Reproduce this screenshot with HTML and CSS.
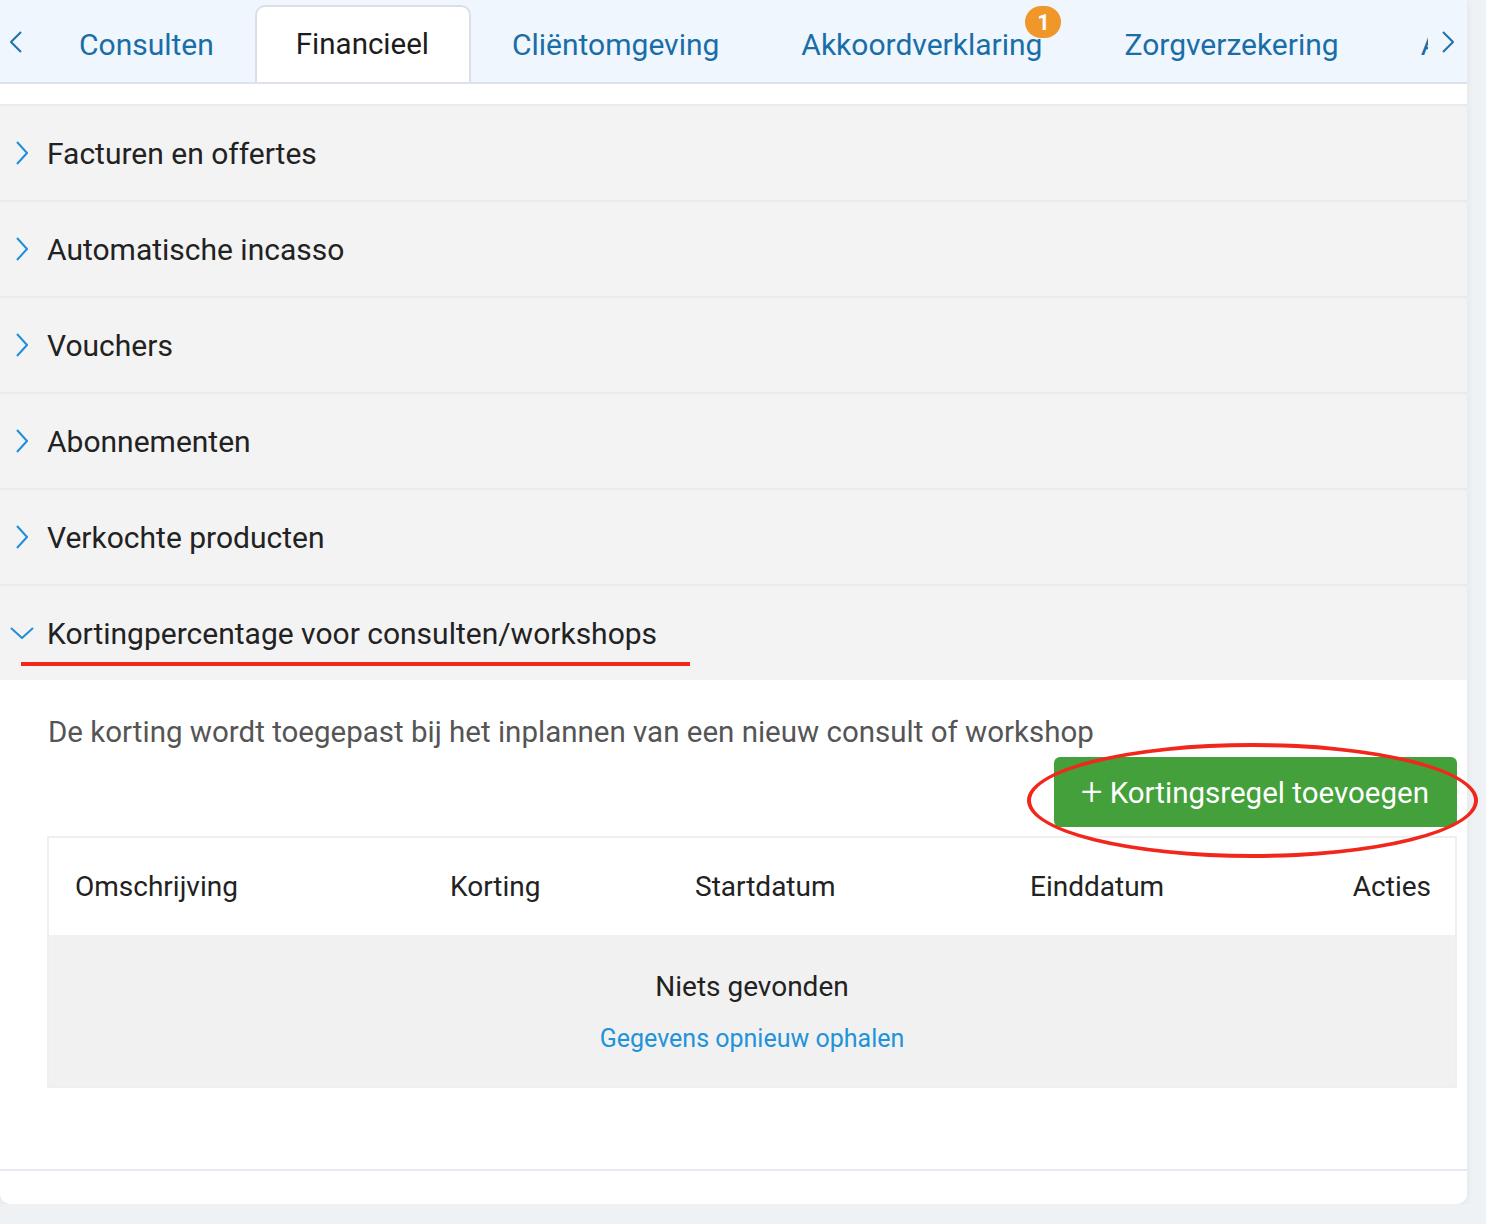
FILE: index.html
```html
<!DOCTYPE html>
<html lang="nl">
<head>
    <meta charset="UTF-8">
    <meta name="viewport" content="width=device-width, initial-scale=1.0">
    <title>Financieel</title>
    <link rel="stylesheet" href="styles.css">
</head>
<body>
    <div class="card">
        <div class="tabbar">
            <button class="tab-arrow" type="button" aria-label="Vorige">
                <svg width="12" height="22" viewBox="0 0 12 22"><path d="M11 1 1 11l10 10" fill="none" stroke="currentColor" stroke-width="2"/></svg>
            </button>
            <div class="tabs">
                <div class="tab">Consulten</div>
                <div class="tab active">Financieel</div>
                <div class="tab">Cliëntomgeving</div>
                <div class="tab">Akkoordverklaring<span class="badge">1</span></div>
                <div class="tab">Zorgverzekering</div>
                <div class="tab">Afspraken</div>
            </div>
            <button class="tab-arrow" type="button" aria-label="Volgende">
                <svg width="12" height="22" viewBox="0 0 12 22"><path d="M1 1l10 10L1 21" fill="none" stroke="currentColor" stroke-width="2"/></svg>
            </button>
        </div>

        <div class="accordion">
            <div class="panel">
                <div class="panel-head">
                    <svg class="chevron" width="12" height="24" viewBox="0 0 12 24"><path d="M1 1l10 11L1 23" fill="none" stroke="currentColor" stroke-width="2"/></svg>
                    <span>Facturen en offertes</span>
                </div>
            </div>
            <div class="panel">
                <div class="panel-head">
                    <svg class="chevron" width="12" height="24" viewBox="0 0 12 24"><path d="M1 1l10 11L1 23" fill="none" stroke="currentColor" stroke-width="2"/></svg>
                    <span>Automatische incasso</span>
                </div>
            </div>
            <div class="panel">
                <div class="panel-head">
                    <svg class="chevron" width="12" height="24" viewBox="0 0 12 24"><path d="M1 1l10 11L1 23" fill="none" stroke="currentColor" stroke-width="2"/></svg>
                    <span>Vouchers</span>
                </div>
            </div>
            <div class="panel">
                <div class="panel-head">
                    <svg class="chevron" width="12" height="24" viewBox="0 0 12 24"><path d="M1 1l10 11L1 23" fill="none" stroke="currentColor" stroke-width="2"/></svg>
                    <span>Abonnementen</span>
                </div>
            </div>
            <div class="panel">
                <div class="panel-head">
                    <svg class="chevron" width="12" height="24" viewBox="0 0 12 24"><path d="M1 1l10 11L1 23" fill="none" stroke="currentColor" stroke-width="2"/></svg>
                    <span>Verkochte producten</span>
                </div>
            </div>
            <div class="panel open">
                <div class="panel-head">
                    <svg class="chevron" width="24" height="12" viewBox="0 0 24 12"><path d="M1 1l11 10L23 1" fill="none" stroke="currentColor" stroke-width="2"/></svg>
                    <span>Kortingpercentage voor consulten/workshops</span>
                    <div class="mark-line"></div>
                </div>
                <div class="panel-body">
                    <p class="intro">De korting wordt toegepast bij het inplannen van een nieuw consult of workshop</p>
                    <div class="actions">
                        <button class="btn-add" type="button"><span class="plus">+</span> Kortingsregel toevoegen</button>
                        <div class="mark-ring"></div>
                    </div>
                    <table class="discounts">
                        <colgroup>
                            <col class="c-desc">
                            <col class="c-pct">
                            <col class="c-start">
                            <col class="c-end">
                            <col>
                        </colgroup>
                        <thead>
                            <tr>
                                <th>Omschrijving</th>
                                <th>Korting</th>
                                <th>Startdatum</th>
                                <th>Einddatum</th>
                                <th class="right">Acties</th>
                            </tr>
                        </thead>
                        <tbody>
                            <tr class="empty">
                                <td colspan="5">
                                    <div>Niets gevonden</div>
                                    <a href="#">Gegevens opnieuw ophalen</a>
                                </td>
                            </tr>
                        </tbody>
                    </table>
                </div>
            </div>
        </div>
    </div>
</body>
</html>
```

FILE: styles.css
```css
body {
    font-family: Roboto, "Noto Sans", sans-serif;
    background-color: #eef2f4;
    margin: 0;
    color: #222;
}

.card {
    width: 1467px;
    background: #fff;
    border-radius: 0 0 10px 10px;
    box-shadow: 0 2px 10px rgba(0, 0, 0, 0.06);
    padding-bottom: 33px;
}

/* tab strip */
.tabbar {
    display: flex;
    height: 82px;
    background-color: #eff6fe;
    border-bottom: 2px solid #dde2ec;
    margin-bottom: 20px;
}

.tab-arrow {
    flex: 0 0 auto;
    width: 38px;
    border: none;
    background: none;
    padding: 0;
    color: #1f73ab;
    display: flex;
    align-items: center;
    justify-content: center;
    padding-top: 2px;
}

.tab-arrow:first-child {
    justify-content: flex-start;
    padding-left: 10px;
}

.tab-arrow:last-child {
    width: 39px;
}

.tabs {
    flex: 1;
    display: flex;
    align-items: flex-end;
    overflow: hidden;
}

.tab {
    position: relative;
    flex: 0 0 auto;
    height: 74px;
    padding: 0 41px 3px;
    display: flex;
    align-items: center;
    font-size: 30px;
    color: #1a6ea7;
    white-space: nowrap;
    margin-bottom: -2px;
}

.tab:first-child {
    padding-left: 41px;
}

.tab.active {
    background: #fff;
    color: #1c1c1c;
    border: 2px solid #d9dee8;
    border-bottom: none;
    border-radius: 10px 10px 0 0;
    padding: 0 40px 3px 39px;
    height: 74px;
    font-size: 29.5px;
}

.badge {
    position: absolute;
    top: -1px;
    right: 22px;
    width: 36px;
    height: 32px;
    border-radius: 16px;
    background: #f0972a;
    color: #fff;
    font-size: 22px;
    font-weight: 700;
    display: flex;
    align-items: center;
    justify-content: center;
}

/* accordion */
.panel {
    border-top: 2px solid #e8eaf2;
    background: #f3f3f3;
}

.panel.open {
    border-bottom: 2px solid #e6e8f3;
}

.panel-head {
    position: relative;
    height: 94px;
    display: flex;
    align-items: center;
    font-size: 30px;
    color: #222;
}

.chevron {
    flex: 0 0 auto;
    color: #1f8fd8;
    margin-left: 16px;
    margin-right: 19px;
}

.panel.open .chevron {
    margin-left: 10px;
    margin-right: 13px;
}

.mark-line {
    position: absolute;
    left: 21px;
    top: 76px;
    width: 669px;
    height: 4px;
    background: #f2271c;
}

.panel-body {
    background: #fff;
    padding: 34px 10px 81px 47px;
}

.intro {
    margin: 0;
    font-size: 29.5px;
    color: #555;
    line-height: 36px;
    padding-left: 1px;
}

.actions {
    position: relative;
    display: flex;
    justify-content: flex-end;
    margin-top: 7px;
    margin-bottom: 9px;
}

.btn-add {
    height: 70px;
    padding: 0 28px 0 27px;
    background-color: #43a03a;
    color: #fff;
    border: none;
    border-radius: 6px;
    font-family: inherit;
    font-size: 29.5px;
}

.btn-add .plus {
    font-size: 38px;
    font-weight: 300;
    line-height: 1;
    vertical-align: -2px;
}

.mark-ring {
    position: absolute;
    right: -21px;
    top: -14px;
    width: 451px;
    height: 115px;
    border: 4px solid #f2271c;
    border-radius: 50%;
    box-sizing: border-box;
    pointer-events: none;
}

/* discount table */
.discounts {
    width: 100%;
    border-collapse: collapse;
    table-layout: fixed;
    border: 2px solid #efefef;
}

.c-desc { width: 376px; }
.c-pct { width: 245px; }
.c-start { width: 335px; }
.c-end { width: 250px; }

.discounts th {
    height: 97px;
    padding: 0 0 0 26px;
    text-align: left;
    font-weight: 400;
    font-size: 28px;
    color: #222;
}

.discounts th.right {
    text-align: right;
    padding: 0 24px 0 0;
}

.empty td {
    background: #f1f1f1;
    text-align: center;
    height: 148px;
    padding: 3px 0 0;
    font-size: 28px;
    line-height: 51px;
}

.empty a {
    color: #2293d8;
    text-decoration: none;
    font-size: 25px;
}
```
